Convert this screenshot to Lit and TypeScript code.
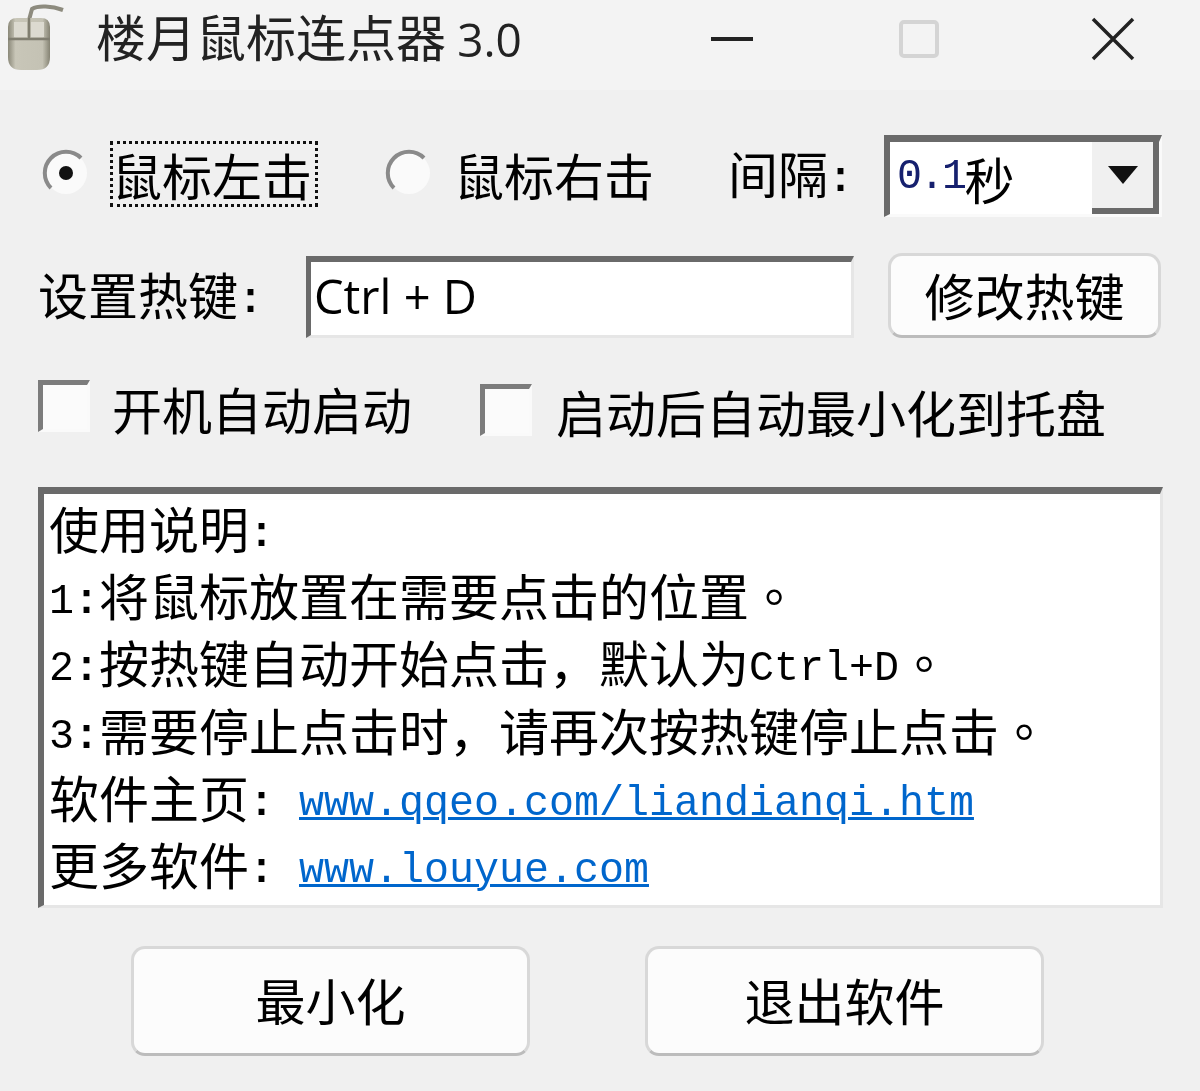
import { LitElement, html, css } from 'lit';
import { customElement } from 'lit/decorators.js';

@customElement('app-root')
export class AppRoot extends LitElement {
  static styles = css`
    :host {
      display: block;
      width: 1200px;
      height: 1091px;
      overflow: hidden;
      background: #f0f0f0;
      color: #000;
      font-family: "Noto Sans CJK SC", sans-serif;
      font-size: 50px;
      font-weight: 400;
      line-height: 1;
      filter: blur(0.6px);
    }
    .title {
      height: 90px;
      background: #f3f3f3;
      display: flex;
      align-items: center;
      padding-left: 6px;
    }
    .app-icon { width: 62px; height: 76px; flex: none; margin-bottom: 16px; }
    .title-text {
      margin-left: 28px;
      width: 615px;
      margin-bottom: 18px;
      white-space: pre;
      color: #222;
    }
    .ver { font-family: "Open Sans", sans-serif; font-size: 46px; font-weight: 400; }
    .ctl { flex: none; display: block; margin-bottom: 12px; }
    .ctl-min { width: 42px; height: 42px; }
    .ctl-max { width: 40px; height: 38px; margin-left: 146px; }
    .ctl-close { width: 44px; height: 44px; margin-left: 152px; }
    .main { padding: 45px 38px 0; display: flex; flex-direction: column; }
    .row { display: flex; align-items: center; }
    .row1 { height: 82px; padding-left: 4px; }
    .row2 { height: 85px; margin-top: 36px; }
    .row3 { height: 56px; margin-top: 42px; }
    .radio { width: 48px; height: 48px; flex: none; margin-bottom: 6px; }
    .focus {
      margin-left: 20px;
      width: 208px;
      height: 66px;
      flex: none;
      box-sizing: border-box;
      border: 3px dotted #111;
      display: flex;
      align-items: center;
      justify-content: center;
      padding-right: 4px;
      margin-bottom: 4px;
      white-space: nowrap;
    }
    .radio2 { margin-left: 67px; }
    .lbl { white-space: nowrap; flex: none; }
    .lbl-right { margin-left: 21px; margin-bottom: 4px; }
    .lbl-gap { margin-left: 74px; margin-bottom: 4px; }
    .combo {
      margin-left: 31px;
      width: 278px;
      height: 82px;
      flex: none;
      box-sizing: border-box;
      display: flex;
      background: #fff;
      border-top: 7px solid #6a6a6a;
      border-left: 6px solid #6a6a6a;
      border-right: 3px solid #fafafa;
      border-bottom: 3px solid #fafafa;
    }
    .combo-text {
      flex: 1;
      padding-left: 7px;
      display: flex;
      align-items: center;
      white-space: pre;
    }
    .mono { font-family: "Liberation Mono", monospace; font-size: 41.67px; vertical-align: 3px; }
    .colon { font-family: "Liberation Mono", monospace; font-size: 41.67px; font-weight: 700; vertical-align: 3px; }
    .blue { color: #16206e; letter-spacing: -2.5px; }
    .combo-btn {
      width: 67px;
      height: 100%;
      box-sizing: border-box;
      background: #f0f0f0;
      border-right: 6px solid #6a6a6a;
      border-bottom: 6px solid #6a6a6a;
      display: flex;
      align-items: center;
      justify-content: center;
    }
    .arrow { width: 30px; height: 18px; display: block; }
    .field {
      margin-left: 43px;
      width: 548px;
      height: 82px;
      margin-top: 3px;
      flex: none;
      box-sizing: border-box;
      background: #fff;
      border-top: 6px solid #6a6a6a;
      border-left: 5px solid #6a6a6a;
      border-right: 3px solid #e6e6e6;
      border-bottom: 3px solid #e6e6e6;
      display: flex;
      align-items: center;
      padding: 0 0 4px 3px;
      font-family: "Open Sans", sans-serif;
      font-size: 47px;
      white-space: pre;
    }
    .btn {
      flex: none;
      box-sizing: border-box;
      background: #fcfcfc;
      border: 3px solid #d8d8d8;
      border-bottom-color: #bcbcbc;
      border-radius: 14px;
      display: flex;
      align-items: center;
      justify-content: center;
      padding-bottom: 4px;
    }
    .btn-hot { margin-left: 34px; width: 273px; height: 85px; }
    .check {
      width: 52px;
      height: 52px;
      flex: none;
      box-sizing: border-box;
      background: #fbfbfb;
      border-top: 5px solid #7c7c7c;
      border-left: 5px solid #7c7c7c;
      border-right: 3px solid #fafafa;
      border-bottom: 3px solid #fafafa;
    }
    .check-a { margin-bottom: 4px; }
    .check-b { margin-left: 68px; margin-top: 4px; }
    .lbl-a { margin-left: 22px; }
    .lbl-b { margin-left: 24px; margin-top: 6px; }
    .memo {
      margin-top: 51px;
      width: 1125px;
      height: 421px;
      box-sizing: border-box;
      background: #fff;
      border-top: 7px solid #6a6a6a;
      border-left: 6px solid #6a6a6a;
      border-right: 3px solid #e6e6e6;
      border-bottom: 3px solid #e6e6e6;
      padding: 0 0 0 5px;
      overflow: hidden;
    }
    .line { display: block; height: 67.2px; line-height: 67.2px; white-space: pre; }
    .dot { font-family: "Noto Sans CJK TC", sans-serif; }
    a { color: #0066cc; text-decoration: underline; text-decoration-thickness: 3px; }
    .actions { margin-top: 38px; padding-left: 93px; display: flex; gap: 115px; }
    .btn-wide { width: 399px; height: 110px; }
  `;

  render() {
    return html`
      <div class="title">
        <svg class="app-icon" viewBox="0 0 62 76">
          <defs>
            <linearGradient id="m" x1="0" x2="1" y1="0" y2="0">
              <stop offset="0" stop-color="#8a8878"></stop>
              <stop offset="0.18" stop-color="#c8c6b8"></stop>
              <stop offset="0.82" stop-color="#c4c2b4"></stop>
              <stop offset="1" stop-color="#858373"></stop>
            </linearGradient>
          </defs>
          <path d="M23 21 L26 10 C32 6 46 7 57 11" fill="none" stroke="#8d8b7e" stroke-width="4"></path>
          <path d="M2 28 Q2 19 11 19 H35 Q44 19 44 28 V58 Q44 71 31 71 H15 Q2 71 2 58 Z" fill="url(#m)"></path>
          <rect x="8" y="23" width="13" height="15" fill="#dcdad0"></rect>
          <rect x="25" y="23" width="13" height="15" fill="#dcdad0"></rect>
          <path d="M2 40 H44 M23 19 V40" stroke="#807e70" stroke-width="2.5" fill="none"></path>
        </svg>
        <div class="title-text">楼月鼠标连点器 <span class="ver">3.0</span></div>
        <svg class="ctl ctl-min" viewBox="0 0 42 42"><path d="M0 21 H42" stroke="#222" stroke-width="4"></path></svg>
        <svg class="ctl ctl-max" viewBox="0 0 40 38"><rect x="2" y="2" width="36" height="34" rx="3" fill="none" stroke="#d4d4d4" stroke-width="4"></rect></svg>
        <svg class="ctl ctl-close" viewBox="0 0 44 44"><path d="M2 2 L42 42 M42 2 L2 42" stroke="#222" stroke-width="3.5"></path></svg>
      </div>
      <div class="main">
        <div class="row row1">
          <svg class="radio" viewBox="0 0 48 48">
            <circle cx="24" cy="24" r="21" fill="#fafafa"></circle>
            <path d="M39 9 A21 21 0 0 0 9 39" fill="none" stroke="#8a8a8a" stroke-width="4"></path>
            <circle cx="24" cy="24" r="7" fill="#111"></circle>
          </svg>
          <div class="focus">鼠标左击</div>
          <svg class="radio radio2" viewBox="0 0 48 48">
            <circle cx="24" cy="24" r="21" fill="#fafafa"></circle>
            <path d="M39 9 A21 21 0 0 0 9 39" fill="none" stroke="#8a8a8a" stroke-width="4"></path>
          </svg>
          <div class="lbl lbl-right">鼠标右击</div>
          <div class="lbl lbl-gap">间隔<span class="colon">:</span></div>
          <div class="combo">
            <div class="combo-text"><span class="mono blue">0.1</span>秒</div>
            <div class="combo-btn">
              <svg class="arrow" viewBox="0 0 30 18"><path d="M0 0 H30 L15 18 Z" fill="#111"></path></svg>
            </div>
          </div>
        </div>
        <div class="row row2">
          <div class="lbl">设置热键<span class="colon">:</span></div>
          <div class="field">Ctrl + D</div>
          <div class="btn btn-hot">修改热键</div>
        </div>
        <div class="row row3">
          <div class="check check-a"></div>
          <div class="lbl lbl-a">开机自动启动</div>
          <div class="check check-b"></div>
          <div class="lbl lbl-b">启动后自动最小化到托盘</div>
        </div>
        <div class="memo">
          <span class="line">使用说明<span class="colon">:</span></span>
          <span class="line"><span class="mono">1</span><span class="colon">:</span>将鼠标放置在需要点击的位置<span class="dot">。</span></span>
          <span class="line"><span class="mono">2</span><span class="colon">:</span>按热键自动开始点击，默认为<span class="mono">Ctrl+D</span><span class="dot">。</span></span>
          <span class="line"><span class="mono">3</span><span class="colon">:</span>需要停止点击时，请再次按热键停止点击<span class="dot">。</span></span>
          <span class="line">软件主页<span class="colon">: </span><a class="mono" href="#">www.qqeo.com/liandianqi.htm</a></span>
          <span class="line">更多软件<span class="colon">: </span><a class="mono" href="#">www.louyue.com</a></span>
        </div>
        <div class="actions">
          <div class="btn btn-wide">最小化</div>
          <div class="btn btn-wide">退出软件</div>
        </div>
      </div>
    `;
  }
}
